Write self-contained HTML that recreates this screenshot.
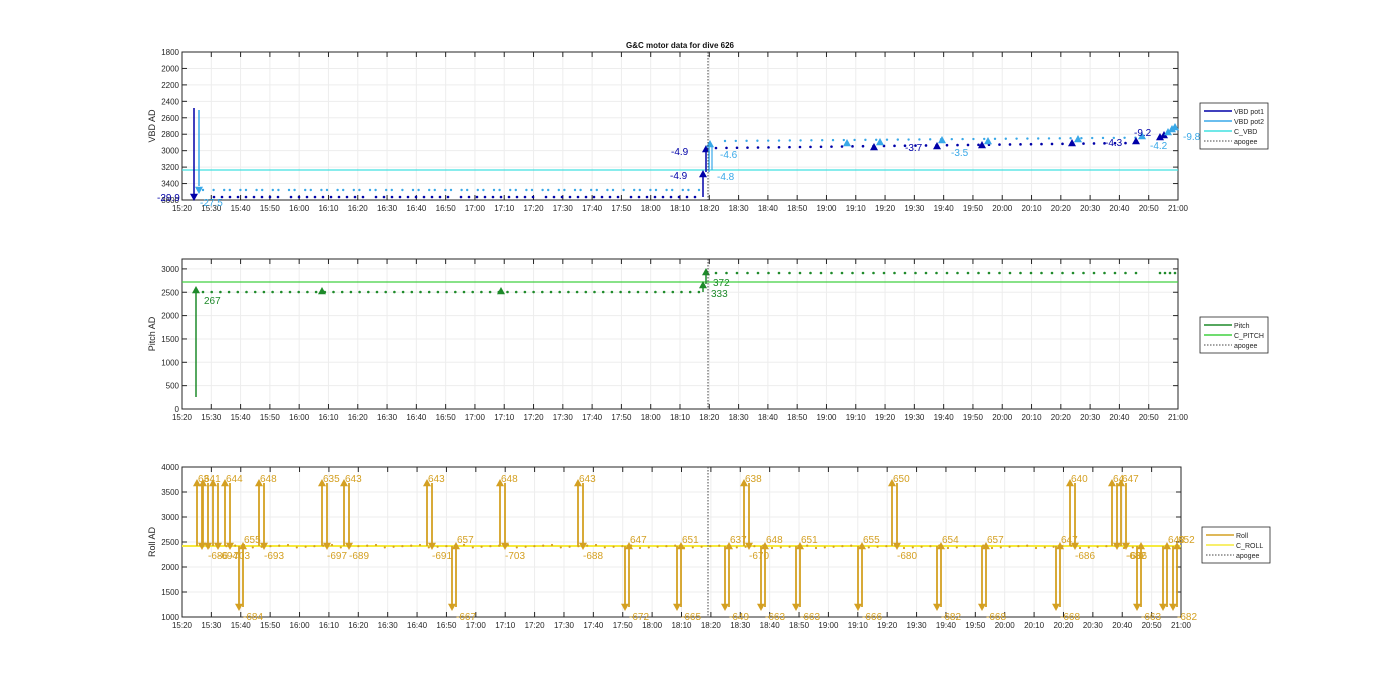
<!DOCTYPE html>
<html><head><meta charset="utf-8"><style>
html,body{margin:0;padding:0;background:#fff;}
svg{display:block;font-family:"Liberation Sans",sans-serif;}
</style></head><body>
<svg id="s" width="1400" height="693" xmlns="http://www.w3.org/2000/svg">
<text x="680" y="48" font-size="8" font-weight="bold" text-anchor="middle" fill="#111">G&amp;C motor data for dive 626</text>
</svg>
<script>
const S=document.getElementById('s');const NS='http://www.w3.org/2000/svg';
function el(t,a,txt){const e=document.createElementNS(NS,t);for(const k in a)e.setAttribute(k,a[k]);if(txt!==undefined)e.textContent=txt;S.appendChild(e);return e;}
function line(x1,y1,x2,y2,c,w,d){const a={x1,y1,x2,y2,stroke:c,'stroke-width':w||1};if(d)a['stroke-dasharray']=d;return el('line',a);}
function tri(x,y,c,up,s){s=s||4;const p=up?`${x},${y-s} ${x-s},${y+s*0.8} ${x+s},${y+s*0.8}`:`${x},${y+s} ${x-s},${y-s*0.8} ${x+s},${y-s*0.8}`;el('polygon',{points:p,fill:c});}
function txt(x,y,t,c,fs,anc){el('text',{x,y,'font-size':fs||10,fill:c,'text-anchor':anc||'start'},t);}
const labels=[];for(let m=0;m<=340;m+=10){const h=15+Math.floor((20+m)/60),mm=(20+m)%60;labels.push(h+':'+(mm<10?'0':'')+mm);}
function axes(x0,x1,y0,y1,yt,yl){
 const X=m=>x0+m*(x1-x0)/340;
 for(let i=0;i<=34;i++){const x=X(i*10);line(x,y0,x,y1,'#ededed',1);}
 yt.forEach(([y,l])=>{line(x0,y,x1,y,'#ededed',1);});
 el('rect',{x:x0,y:y0,width:x1-x0,height:y1-y0,fill:'none',stroke:'#262626','stroke-width':1});
 for(let i=0;i<=34;i++){const x=X(i*10);line(x,y0,x,y0+5,'#262626',1);line(x,y1,x,y1-5,'#262626',1);txt(x,y1+11,labels[i],'#262626',8,'middle');}
 yt.forEach(([y,l])=>{line(x0,y,x0+5,y,'#262626',1);line(x1,y,x1-5,y,'#262626',1);txt(x0-3,y+3,l,'#262626',8,'end');});
 el('text',{x:0,y:0,'font-size':9,fill:'#262626','text-anchor':'middle',transform:`translate(${x0-27},${(y0+y1)/2}) rotate(-90)`},yl);
 return X;
}
function legend(x,y,items){const h=items.length*10+6;el('rect',{x,y,width:68,height:h,fill:'#fff',stroke:'#262626','stroke-width':0.8});
 items.forEach((it,i)=>{const yy=y+8+i*10;line(x+4,yy,x+32,yy,it[1],it[2]||1.5,it[3]);txt(x+34,yy+3,it[0],'#262626',7);});}
// TOP
const tops=[];for(let v=1800;v<=3600;v+=200)tops.push([52+(v-1800)*148/1800,String(v)]);
axes(182,1178,52,200,tops,'VBD AD');
const AP=708;
const P1='#0000a8',P2='#38a8e8',CV='#40e0e0';
line(182,170,1178,170,CV,1.2);
function dots(fromx,tox,step,y,c,r,jit){for(let x=fromx;x<=tox;x+=step){el('circle',{cx:x+(jit?((x*7)%5-2):0),cy:y,r:r||1.2,fill:c});}}
dots(212,700,8.5,197,P1,1.3,1);dots(205,700,8.2,190,P2,1.2,1);
for(let x=716;x<1135;x+=10.5){el('circle',{cx:x,cy:148-(x-716)*0.012,r:1.3,fill:P1});}
for(let x=722;x<1140;x+=10.8){el('circle',{cx:x+3,cy:141-(x-722)*0.008,r:1.2,fill:P2});}
line(194,108,194,194,P1,1.5);tri(194,197,P1,false,4);
line(199,110,199,186,P2,1.5);tri(199,190,P2,false,4);
txt(157,201,'-29.9',P1,10);txt(200,206,'-27.5',P2,10);
line(703,197,703,175,P1,1.5);tri(703,174,P1,true,4);line(706,172,706,151,P1,1.5);tri(706,149,P1,true,4);
line(709,172,709,146,P2,1.5);tri(710,144,P2,true,4);line(712,146,712,170,P2,1.2);
txt(670,179,'-4.9',P1,10);txt(671,155,'-4.9',P1,10);txt(717,180,'-4.8',P2,10);txt(720,158,'-4.6',P2,10);
[[874,147],[937,146],[982,145],[1072,143],[1136,141],[1160,137],[1164,135]].forEach(p=>tri(p[0],p[1],P1,true,4));
[[847,143],[880,142],[942,140],[988,141],[1078,139],[1142,136],[1168,132],[1172,129],[1175,127]].forEach(p=>tri(p[0],p[1],P2,true,4));
txt(905,151,'-3.7',P1,10);txt(951,156,'-3.5',P2,10);txt(1105,146,'-4.3',P1,10);txt(1134,136,'-9.2',P1,10);txt(1150,149,'-4.2',P2,10);txt(1183,140,'-9.8',P2,10);
line(AP,52,AP,200,'#444',1,'1.5,1.5');
legend(1200,103,[['VBD pot1',P1],['VBD pot2',P2],['C_VBD',CV],['apogee','#444',1,'1.5,1.5']]);
// MIDDLE
const mids=[];for(let v=0;v<=3000;v+=500)mids.push([409-v*0.0467,String(v)]);
axes(182,1178,259,409,mids,'Pitch AD');
const G='#1e8a2a',CP='#40d040';
line(182,282,1178,282,CP,1.2);
for(let x=203;x<700;x+=8.7)el('circle',{cx:x,cy:292,r:1.3,fill:G});
for(let x=716;x<1140;x+=10.5)el('circle',{cx:x,cy:273,r:1.3,fill:G});
for(let x=1160;x<1178;x+=5)el('circle',{cx:x,cy:273,r:1.3,fill:G});
line(196,397,196,293,G,1.5);tri(196,290,G,true,4);txt(204,304,'267',G,10);
tri(322,291,G,true,4);tri(501,291,G,true,4);
line(703,292,703,287,G,1.5);tri(703,285,G,true,4);line(706,284,706,274,G,1.5);tri(706,272,G,true,4);
txt(713,286,'372',G,10);txt(711,297,'333',G,10);
line(AP,259,AP,409,'#444',1,'1.5,1.5');
legend(1200,317,[['Pitch',G],['C_PITCH',CP],['apogee','#444',1,'1.5,1.5']]);
// BOTTOM
const bots=[];for(let v=1000;v<=4000;v+=500)bots.push([617-(v-1000)*0.05,String(v)]);
axes(182,1181,467,617,bots,'Roll AD');
const R='#d4a022',CR='#f6ea3c';
line(182,546,1181,546,CR,2);
for(let x=200;x<1150;x+=8.8)el('circle',{cx:x,cy:546+((x*3)%3-1),r:1.1,fill:R});
const high=[[197,'63',null],[203,'641','-686'],[213,null,'-694'],[225,'644','-703'],[259,'648','-693'],[322,'635','-697'],[344,'643','-689'],[427,'643','-691'],[500,'648','-703'],[578,'643','-688'],[744,'638','-670'],[892,'650','-680'],[1070,'640','-686'],[1112,'64',null],[1121,'647','-682']];
high.forEach(([x,p,n])=>{line(x,546,x,486,R,1.8);tri(x,483,R,true,4);line(x+5,483,x+5,543,R,1.8);tri(x+5,546,R,false,4);
 if(p)txt(x+1,482,p,R,10);if(n)txt(x+5,559,n,R,10);});
const low=[[242,'655','-684'],[455,'657','-667'],[628,'647','-672'],[680,'651','-665'],[728,'637','-649'],[764,'648','-663'],[799,'651','-663'],[861,'655','-666'],[940,'654','-682'],[985,'657','-668'],[1059,'647','-668'],[1140,null,'-663'],[1166,'648',null],[1176,'652','-682']];
low.forEach(([x,p,n])=>{line(x-3,546,x-3,604,R,1.8);tri(x-3,607,R,false,4);line(x+1,607,x+1,549,R,1.8);tri(x+1,546,R,true,4);
 if(p)txt(x+2,543,p,R,10);if(n)txt(x+1,620,n,R,10);});
txt(1127,559,'-686',R,10);
line(AP,467,AP,617,'#444',1,'1.5,1.5');
legend(1202,527,[['Roll',R],['C_ROLL',CR],['apogee','#444',1,'1.5,1.5']]);
</script>
</body></html>
